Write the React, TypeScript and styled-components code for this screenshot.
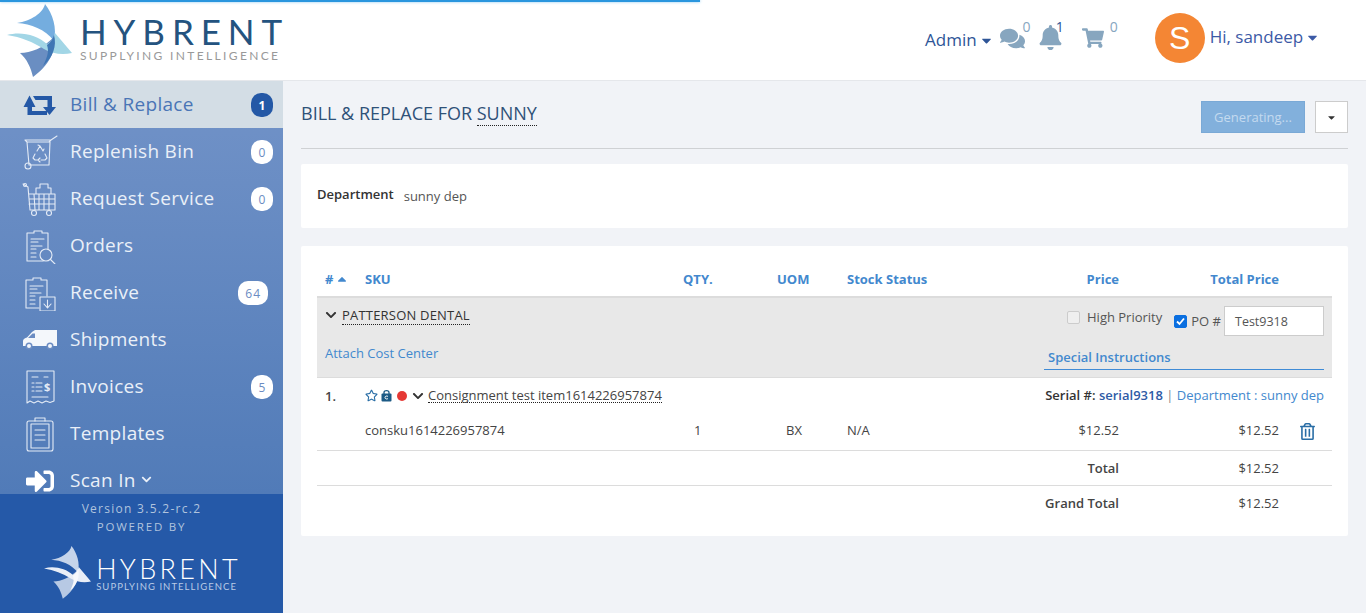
import React from "react";
import styled, { createGlobalStyle } from "styled-components";
import { FaComments, FaBell, FaShoppingCart, FaSignInAlt, FaRegStar, FaRegTrashAlt, FaChevronDown, FaCaretDown, FaCaretUp } from "react-icons/fa";

const Global = createGlobalStyle`
  html, body { margin: 0; padding: 0; height: 100%; overflow: hidden; background: #f1f3f7; }
  body { font-family: "Open Sans", "Liberation Sans", sans-serif; font-size: 13px; color: #333; }
  * { box-sizing: border-box; }
`;

const Page = styled.div`display: flex; flex-direction: column; width: 1366px; height: 613px; position: relative; overflow: hidden;`;
const Progress = styled.div`position: absolute; top: 0; left: 0; width: 700px; height: 2px; background: #2a96de; box-shadow: 0 0 3px #7cc0ee;`;
const Header = styled.header`height: 81px; flex: none; background: #fff; border-bottom: 1px solid #e5e7eb; display: flex; align-items: flex-start;`;
const LogoBox = styled.div`width: 283px; height: 80px; display: flex; padding: 4px 0 0 7px; gap: 8px;`;
const LogoText = styled.div<{ $light?: boolean }>`display: flex; flex-direction: column; color: ${p => p.$light ? "#fff" : "#24537f"};`;
const LogoName = styled.span<{ $size: number; $ls: number; $top: number; $weight: number }>`
  font-family: Lato, "Open Sans", sans-serif; font-weight: ${p => p.$weight}; font-size: ${p => p.$size}px; letter-spacing: ${p => p.$ls}px; line-height: ${p => p.$size}px; margin-top: ${p => p.$top}px; white-space: nowrap;`;
const LogoSub = styled.span<{ $size: number; $ls: number; $color: string; $top: number }>`
  font-family: Lato, "Open Sans", sans-serif; font-size: ${p => p.$size}px; letter-spacing: ${p => p.$ls}px; line-height: ${p => p.$size}px; color: ${p => p.$color}; white-space: nowrap; margin-top: ${p => p.$top}px;`;

const TopNav = styled.div`flex: 1; display: flex; align-items: flex-start; padding-left: 642px;`;
const AdminLink = styled.span`font-size: 17px; color: #2e5597; margin-top: 28px; line-height: 24px; display: flex; align-items: center; gap: 2px;`;
const IconStat = styled.div<{ $ml: number }>`display: flex; align-items: flex-start; margin-left: ${p => p.$ml}px; margin-top: 19px; color: #87a6bf;`;
const StatIcon = styled.span<{ $top: number }>`display: flex; margin-top: ${p => p.$top}px;`;
const StatNum = styled.span<{ $dark?: boolean; $ml: number }>`font-size: 14px; line-height: 16px; margin-left: ${p => p.$ml}px; color: ${p => p.$dark ? "#2e5597" : "#87a6bf"};`;
const Avatar = styled.div`width: 50px; height: 50px; border-radius: 50%; background: #f48634; color: #fff; font-family: "Liberation Sans", sans-serif; font-size: 32px; display: flex; align-items: center; justify-content: center; margin-left: 37px; margin-top: 13px; flex: none;`;
const UserLink = styled.span`font-size: 17px; color: #3c5aa6; margin-left: 5px; margin-top: 25px; line-height: 24px; display: flex; align-items: center; gap: 2px; white-space: nowrap;`;

const Body = styled.div`flex: 1; display: flex; min-height: 0;`;
const Sidebar = styled.aside`width: 283px; flex: none; display: flex; flex-direction: column;`;
const Nav = styled.nav`height: 413px; overflow: hidden; background: linear-gradient(#7293c8, #517bb8);`;
const NavItem = styled.div<{ $active?: boolean }>`
  height: 47px; display: flex; align-items: center; position: relative; padding: 0 0 2px 70px;
  background: ${p => p.$active ? "#d3dde5" : "transparent"}; color: ${p => p.$active ? "#4a75b6" : "#eaf0f8"};
  font-size: 19px; letter-spacing: 0.3px; white-space: nowrap;`;
const NavIcon = styled.span`position: absolute; left: 22px; top: 0; width: 36px; height: 47px; display: flex; align-items: center; justify-content: center; color: #e4ebf6;`;
const Badge = styled.span<{ $active?: boolean; $wide?: boolean }>`
  position: absolute; top: 12px; right: ${p => p.$wide ? 15 : 10}px; height: 24px; min-width: 22px; padding: 0 ${p => p.$wide ? 7 : 4}px; border-radius: 10px;
  background: ${p => p.$active ? "#2458a6" : "#fff"}; color: ${p => p.$active ? "#fff" : "#6b8cc2"};
  font-size: 12px; font-weight: ${p => p.$active ? 700 : 400}; letter-spacing: ${p => p.$wide ? 1 : 0}px; display: flex; align-items: center; justify-content: center;`;
const Foot = styled.div`flex: 1; background: #2559a8; display: flex; flex-direction: column; align-items: center;`;
const Version = styled.div`font-size: 12px; letter-spacing: 1.28px; color: #b1c4de; line-height: 18px; margin-top: 6px;`;
const Powered = styled.div`font-size: 11.5px; letter-spacing: 1.8px; color: #b1c4de; line-height: 18px;`;
const FootLogo = styled.div`display: flex; margin-top: 10px; margin-left: 2px; gap: 5px; align-items: flex-start;`;

const Main = styled.main`flex: 1; padding: 0 18px; min-width: 0;`;
const TitleRow = styled.div`height: 68px; border-bottom: 1px solid #cfd1d4; display: flex; justify-content: space-between; align-items: flex-start; padding-top: 20px;`;
const Title = styled.h1`margin: 0; font-size: 18px; font-weight: 400; color: #2f5178; line-height: 25px;`;
const Dotted = styled.span`border-bottom: 1px dotted #222;`;
const Buttons = styled.div`display: flex; gap: 10px;`;
const GenButton = styled.button`width: 104px; height: 32px; background: #82b0dc; border: 1px solid #7aa9d6; color: #c4daef; font-family: inherit; font-size: 13px; padding: 0;`;
const CaretButton = styled.button`width: 33px; height: 32px; background: #fff; border: 1px solid #ccc; padding: 0; color: #333; display: flex; align-items: center; justify-content: center;`;
const Card = styled.section<{ $mt: number }>`background: #fff; margin-top: ${p => p.$mt}px; border-radius: 2px;`;
const DeptCard = styled(Card)`height: 64px; padding: 21px 16px; display: flex; align-items: flex-start; gap: 10px;`;
const DeptLabel = styled.span`font-weight: 600; color: #333; line-height: 18px;`;
const DeptValue = styled.span`color: #555; line-height: 22px;`;
const TableCard = styled(Card)`height: 290px; padding: 16px 16px 0;`;

const columns = "8px 40px 318px 94px 70px 100px 172px 160px 53px";
const HeadRow = styled.div`display: grid; grid-template-columns: ${columns}; height: 36px; align-items: center; border-bottom: 2px solid #dcdcdc; color: #4288ce; font-weight: 700; font-size: 13px;`;
const ItemRow = styled.div<{ $h: number; $border?: boolean; $pb?: number }>`display: grid; grid-template-columns: ${columns}; height: ${p => p.$h}px; padding-bottom: ${p => p.$pb ?? 0}px; align-items: center; color: #444; font-size: 13px; ${p => p.$border ? "border-bottom: 1px solid #dcdcdc;" : ""}`;
const Cell = styled.div<{ $col: number; $right?: boolean; $pl?: number; $bold?: boolean }>`
  grid-column: ${p => p.$col}; grid-row: 1; text-align: ${p => p.$right ? "right" : "left"}; padding-left: ${p => p.$pl ?? 0}px; font-weight: ${p => p.$bold ? 600 : "inherit"}; white-space: nowrap;`;
const SpanCell = styled.div`grid-column: 3 / 10; grid-row: 1; display: flex; justify-content: space-between; align-items: center; padding-right: 8px; white-space: nowrap;`;
const SortHash = styled.span`display: inline-flex; align-items: center; gap: 2px;`;

const Vendor = styled.div`height: 80px; background: #e8e8e8; border-bottom: 1px solid #dcdcdc; display: flex; justify-content: space-between; padding: 0 8px;`;
const VendorLeft = styled.div`display: flex; flex-direction: column;`;
const VendorName = styled.div`display: flex; align-items: center; gap: 5px; margin-top: 7px; height: 20px; font-size: 13px; color: #333; letter-spacing: .2px;`;
const CostLink = styled.a`color: #4288ce; margin-top: 19px; line-height: 18px; font-size: 13px;`;
const VendorRight = styled.div`width: 280px; display: flex; flex-direction: column; align-items: flex-end;`;
const Controls = styled.div`display: flex; align-items: flex-start; margin-top: 8px; height: 30px; color: #555; white-space: nowrap;`;
const Check = styled.span<{ $on?: boolean }>`width: 13px; height: 13px; border-radius: 2px; background: ${p => p.$on ? "#0b6fe0" : "#efefef"}; border: 1px solid ${p => p.$on ? "#0b6fe0" : "#ccc"}; color: #fff; display: inline-flex; align-items: center; justify-content: center; flex: none;`;
const Hp = styled.label`display: flex; align-items: center; gap: 7px; height: 18px; margin-top: 2px; margin-right: 12px;`;
const Po = styled.label`display: flex; align-items: center; gap: 4px; height: 30px; margin-right: 3px;`;
const PoInput = styled.div`width: 100px; height: 30px; background: #fff; border: 1px solid #ccc; padding: 0 10px; line-height: 29px; font-size: 12.5px; color: #555;`;
const Special = styled.div`width: 280px; margin-top: 11px; height: 23px; border-bottom: 1px solid #3f8bd6; color: #4288ce; font-weight: 600; padding-left: 4px; line-height: 20px; font-size: 13px;`;

const ItemName = styled.div`display: flex; align-items: center; gap: 3px;`;
const RedDot = styled.span`width: 10px; height: 10px; background: #e53935; border-radius: 50%; margin: 0 2px;`;
const ItemTitle = styled.span`border-bottom: 1px dotted #222; line-height: 14px; margin-left: 1px; color: #444;`;
const SerialBlock = styled.div`color: #333; font-size: 13px; font-weight: 600; margin-top: -2px;`;
const SerialValue = styled.span`color: #2e5ba6;`;
const Sep = styled.span`color: #888; font-weight: 400;`;
const DeptLink = styled.span`color: #4288ce; font-weight: 400;`;
const TrashCell = styled.div`grid-column: 9; grid-row: 1; color: #2a6ea6; padding-left: 20px; display: flex; margin-top: 3px;`;

const Wing: React.FC<{ w: number; mono?: boolean }> = ({ w, mono }) => (
  <svg width={w} height={w * 73 / 65} viewBox="0 0 65 73" style={{ flex: "none" }}>
    <path d="M38 0C36 9 24 17 10 19C24 20 38 25 47 37C50 24 46 10 38 0Z" fill={mono ? "#c6d4ea" : "#74addf"} />
    <path d="M13 49C24 49 36 44 47 33C50 45 42 62 26 73C24 64 20 55 13 49Z" fill={mono ? "#b7c9e4" : "#6a8ec2"} />
    <path d="M0 31C14 27 30 31 40 40C44 38 47 35 48 29L65 49C56 51 45 50 37 45C26 38 14 33 0 31Z" fill={mono ? "#e9eef7" : "#a2d6e6"} />
    <path d="M47 31C50 42 46 53 36 62C41 52 42 47 40 41C44 38 46 35 47 31Z" fill={mono ? "#f6f8fc" : "#3f76b4"} />
  </svg>
);

const L: React.FC<{ children: React.ReactNode }> = ({ children }) => (
  <svg width="36" height="36" viewBox="0 0 36 36" fill="none" stroke="#e4ebf6" strokeWidth="1.1" strokeLinecap="round" strokeLinejoin="round">{children}</svg>
);
const RetweetIcon = () => (
  <svg width="36" height="24" viewBox="0 0 36 24" fill="#2458a6">
    <path d="M7.500 2.500L13.500 14H10V18H25V22H5.500V14H1.500Z" />
    <path d="M11 3H30V14H34L27.500 22L21 14H25.500V7H13.500Z" />
  </svg>
);
const BinIcon = () => <L><path d="M3 6H29L35 2M3 6L5 8H27L29 6M5 8L7 31H27L28 8" /><circle cx="6" cy="32" r="3" /><path d="M15 17L18 12L21 17M13 20L11 24L13 26H16M23 20L25 24L23 26H19M18 12L16 11M21 17L22 15M16 26L18 24M16 26L18 28" /></L>;
const CartIcon = () => <L><path d="M1 3L6 6L8 29H33V13H7M12 13L13 29M17 13V29M22 13V29M27 13V29M7 18H33M7 23H33M14 13V7H18V3H26V7H29V13" /><circle cx="3" cy="4" r="1.500" /><circle cx="12" cy="32" r="2.500" /><circle cx="27" cy="32" r="2.500" /></L>;
const OrderIcon = () => <L><path d="M26 21V5H20V3H12V5H5V33H21M9 11H22M9 14H16M9 18H20M9 21H14M9 25H14M9 29H14" /><circle cx="24" cy="27" r="6" /><path d="M28.500 31.500L33 36" /></L>;
const ReceiveIcon = () => <L><path d="M25 21V5H19V3H11V5H4V33H17M8 11H21M8 14H15M8 18H19M8 21H13M8 25H13M8 29H13" /><path d="M18 22H33V36H18ZM25.500 25V32M22 29L25.500 33L29 29" /></L>;
const TemplateIcon = () => <L><rect x="5" y="5" width="26" height="30" rx="2" /><path d="M13 5V2H23V5M9 8H27V32H9ZM13 14H23M13 19H23M13 24H23" /></L>;
const InvoiceIcon = () => <L><path d="M5 2H32V32L28 33.500L24 32L20 34L16 32L12 34L8 32L5 34ZM10 8H16M22 8H26M10 14H12M14 14H20M10 18H12M14 18H20M10 22H12M14 22H20M10 28H26" /><text x="22" y="22" fill="#e4ebf6" stroke="none" fontSize="11" fontWeight="700" fontFamily="Open Sans">$</text></L>;
const VanIcon = () => (
  <svg width="36" height="24" viewBox="0 0 36 24">
    <path d="M13 2H35V18H1V13C1 11 3 10 5 9.500L10 4C11 3 12 3 13 2Z" fill="#f4f7fb" />
    <path d="M6 10L10.500 5.500H13V10Z" fill="#6b8cc2" />
    <circle cx="7" cy="18" r="3.500" fill="#6b8cc2" /><circle cx="7" cy="18" r="2" fill="#f4f7fb" />
    <circle cx="28" cy="18" r="3.500" fill="#6b8cc2" /><circle cx="28" cy="18" r="2" fill="#f4f7fb" />
  </svg>
);
const ConsignLock = () => (
  <svg width="11" height="13" viewBox="0 0 11 13">
    <path d="M3 5V3.500C3 1 8 1 8 3.500V5" fill="none" stroke="#1c5a85" strokeWidth="1.300" />
    <rect x="0.500" y="4.500" width="10" height="8" rx="1" fill="#1c5a85" />
    <path d="M7 7.500C6 6.500 4 7 4 8.500C4 10 6 10.500 7 9.500" fill="none" stroke="#fff" strokeWidth="1" />
  </svg>
);

export default function App() {
  return (
    <Page>
      <Global />
      <Progress />
      <Header>
        <LogoBox>
          <Wing w={65} />
          <LogoText>
            <LogoName $size={35} $ls={6.9} $top={10} $weight={400}>HYBRENT</LogoName>
            <LogoSub $size={12} $ls={2.35} $color="#999" $top={1}>SUPPLYING INTELLIGENCE</LogoSub>
          </LogoText>
        </LogoBox>
        <TopNav>
          <AdminLink>Admin <FaCaretDown size={15} /></AdminLink>
          <IconStat $ml={6}><StatIcon $top={7}><FaComments size={25} /></StatIcon><StatNum $ml={-2}>0</StatNum></IconStat>
          <IconStat $ml={7}><StatIcon $top={6}><FaBell size={25} /></StatIcon><StatNum $dark $ml={-7}>1</StatNum></IconStat>
          <IconStat $ml={18}><StatIcon $top={8}><FaShoppingCart size={22} /></StatIcon><StatNum $ml={6}>0</StatNum></IconStat>
          <Avatar>S</Avatar>
          <UserLink>Hi, sandeep <FaCaretDown size={15} /></UserLink>
        </TopNav>
      </Header>
      <Body>
        <Sidebar>
          <Nav>
            <NavItem $active><NavIcon><RetweetIcon /></NavIcon>Bill &amp; Replace<Badge $active>1</Badge></NavItem>
            <NavItem><NavIcon><BinIcon /></NavIcon>Replenish Bin<Badge>0</Badge></NavItem>
            <NavItem><NavIcon><CartIcon /></NavIcon>Request Service<Badge>0</Badge></NavItem>
            <NavItem><NavIcon><OrderIcon /></NavIcon>Orders</NavItem>
            <NavItem><NavIcon><ReceiveIcon /></NavIcon>Receive<Badge $wide>64</Badge></NavItem>
            <NavItem><NavIcon><VanIcon /></NavIcon>Shipments</NavItem>
            <NavItem><NavIcon><InvoiceIcon /></NavIcon>Invoices<Badge>5</Badge></NavItem>
            <NavItem><NavIcon><TemplateIcon /></NavIcon>Templates</NavItem>
            <NavItem><NavIcon><FaSignInAlt size={28} color="#fff" /></NavIcon>Scan In&nbsp;<FaChevronDown size={11} /></NavItem>
          </Nav>
          <Foot>
            <Version>Version 3.5.2-rc.2</Version>
            <Powered>POWERED BY</Powered>
            <FootLogo>
              <Wing w={47} mono />
              <LogoText $light>
                <LogoName $size={27} $ls={3.3} $top={9} $weight={300}>HYBRENT</LogoName>
                <LogoSub $size={9.500} $ls={1.05} $color="#b9cbe6" $top={0}>SUPPLYING INTELLIGENCE</LogoSub>
              </LogoText>
            </FootLogo>
          </Foot>
        </Sidebar>
        <Main>
          <TitleRow>
            <Title>BILL &amp; REPLACE FOR <Dotted>SUNNY</Dotted></Title>
            <Buttons>
              <GenButton>Generating...</GenButton>
              <CaretButton><FaCaretDown size={11} /></CaretButton>
            </Buttons>
          </TitleRow>
          <DeptCard $mt={15}>
            <DeptLabel>Department</DeptLabel>
            <DeptValue>sunny dep</DeptValue>
          </DeptCard>
          <TableCard $mt={18}>
            <HeadRow>
              <Cell $col={2}><SortHash># <FaCaretUp size={14} /></SortHash></Cell>
              <Cell $col={3}>SKU</Cell>
              <Cell $col={4}>QTY.</Cell>
              <Cell $col={5}>UOM</Cell>
              <Cell $col={6}>Stock Status</Cell>
              <Cell $col={7} $right>Price</Cell>
              <Cell $col={8} $right>Total Price</Cell>
            </HeadRow>
            <Vendor>
              <VendorLeft>
                <VendorName><FaChevronDown size={12} /><Dotted>PATTERSON DENTAL</Dotted></VendorName>
                <CostLink>Attach Cost Center</CostLink>
              </VendorLeft>
              <VendorRight>
                <Controls>
                  <Hp><Check />High Priority</Hp>
                  <Po><Check $on><svg width="9" height="9" viewBox="0 0 9 9"><path d="M1 4.500L3.500 7L8 1.500" stroke="#fff" strokeWidth="1.800" fill="none" /></svg></Check>PO #</Po>
                  <PoInput>Test9318</PoInput>
                </Controls>
                <Special>Special Instructions</Special>
              </VendorRight>
            </Vendor>
            <ItemRow $h={35}>
              <Cell $col={2} $bold>1.</Cell>
              <SpanCell>
                <ItemName>
                  <FaRegStar size={13} color="#2a6ea6" />
                  <ConsignLock />
                  <RedDot />
                  <FaChevronDown size={12} color="#333" />
                  <ItemTitle>Consignment test item1614226957874</ItemTitle>
                </ItemName>
                <SerialBlock>Serial #: <SerialValue>serial9318</SerialValue> <Sep>|</Sep> <DeptLink>Department : sunny dep</DeptLink></SerialBlock>
              </SpanCell>
            </ItemRow>
            <ItemRow $h={38} $border $pb={3}>
              <Cell $col={3}>consku1614226957874</Cell>
              <Cell $col={4} $pl={11}>1</Cell>
              <Cell $col={5} $pl={9}>BX</Cell>
              <Cell $col={6}>N/A</Cell>
              <Cell $col={7} $right>$12.52</Cell>
              <Cell $col={8} $right>$12.52</Cell>
              <TrashCell><FaRegTrashAlt size={17} /></TrashCell>
            </ItemRow>
            <ItemRow $h={35} $border>
              <Cell $col={7} $right $bold>Total</Cell>
              <Cell $col={8} $right>$12.52</Cell>
            </ItemRow>
            <ItemRow $h={34}>
              <Cell $col={7} $right $bold>Grand Total</Cell>
              <Cell $col={8} $right>$12.52</Cell>
            </ItemRow>
          </TableCard>
        </Main>
      </Body>
    </Page>
  );
}
